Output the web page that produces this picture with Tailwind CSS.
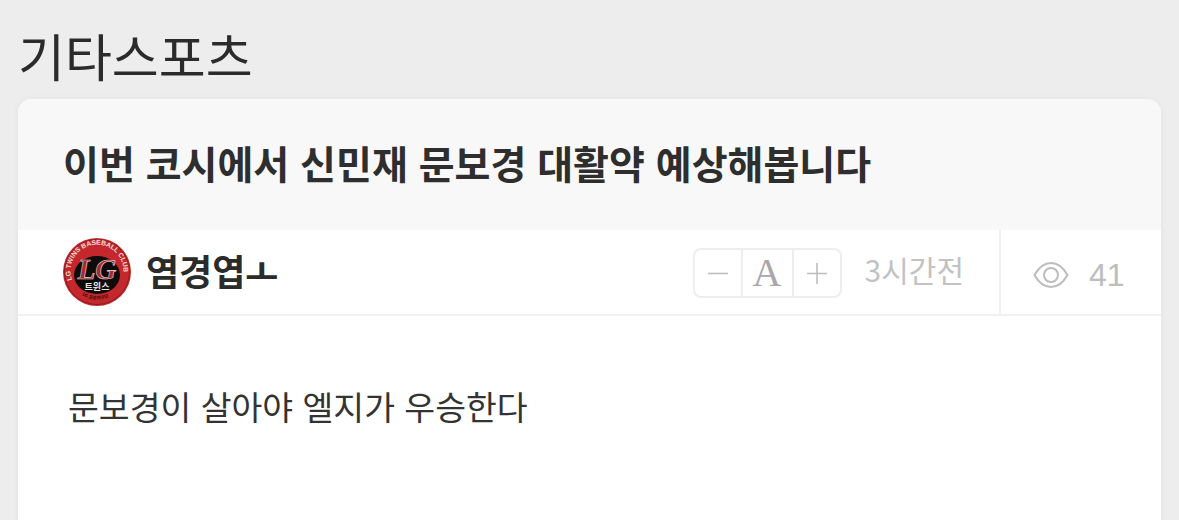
<!DOCTYPE html>
<html lang="ko">
<head>
  <meta charset="UTF-8" />
  <title>기타스포츠</title>
  <script src="https://cdn.jsdelivr.net/npm/@tailwindcss/browser@4"></script>
</head>
<body class="h-[520px] overflow-hidden bg-[#ededed] text-[#2b2b2b] font-['Noto_Sans_CJK_KR',sans-serif]">
  <h1 class="h-[99px] pl-[18px] pt-[20px] text-[51px] leading-[70px] font-normal">기타스포츠</h1>

  <main class="mx-[18px] h-[430px] rounded-t-[14px] bg-white shadow-[0_0_6px_rgba(0,0,0,0.05)]">
    <div class="h-[131px] rounded-t-[14px] bg-[#f8f8f8] pl-[45px] pt-[37px]">
      <h2 class="text-[39px] leading-[52px] font-bold text-[#2e2e2e]">이번 코시에서 신민재 문보경 대활약 예상해봅니다</h2>
    </div>

    <div class="flex h-[86px] items-center border-b-2 border-[#f1f1f1] pl-[45px]">
      <svg viewBox="0 0 68 68" class="h-[68px] w-[68px] shrink-0">
        <defs>
          <path id="ringTop" d="M 9 42 A 26.500 26.500 0 1 1 59 42" />
          <path id="ringBottom" d="M 19 57 A 27 27 0 0 0 49 57" />
        </defs>
        <circle cx="34" cy="34" r="34" fill="#c4282c" />
        <circle cx="34" cy="34" r="32.500" fill="none" stroke="#8a1d20" stroke-width="1" />
        <ellipse cx="34" cy="37" rx="23" ry="19" fill="#0e0b0b" />
        <text font-size="6.800" font-weight="700" fill="#f4dcd6" font-family="'Liberation Sans',sans-serif"><textPath href="#ringTop">LG TWINS BASEBALL CLUB</textPath></text>
        <text font-size="4.500" font-weight="700" fill="#2a0a0a" font-family="'Noto Sans CJK KR',sans-serif"><textPath href="#ringBottom">LG 프로야구단</textPath></text>
        <text x="34" y="41" text-anchor="middle" font-size="29" font-weight="700" font-style="italic" fill="#a82a2c" stroke="#e9d9d6" stroke-width="0.600" font-family="'Liberation Serif',serif">LG</text>
        <text x="34" y="51.500" text-anchor="middle" font-size="9" font-weight="700" fill="#e8e8e8" font-family="'Noto Sans CJK KR',sans-serif">트윈스</text>
      </svg>
      <span class="ml-[15px] mb-[4px] text-[36px] leading-[44px] font-bold text-[#2b2b2b]">염경엽ㅗ</span>

      <div class="ml-auto mt-[2px] flex h-[50px] w-[149px] rounded-[8px] border-2 border-[#eeeeee]">
        <div class="flex w-[48px] items-center justify-center border-r-2 border-[#eeeeee]">
          <svg viewBox="0 0 24 24" class="h-[24px] w-[24px]"><path d="M2 12.500h20" stroke="#bdbdbd" stroke-width="1.600" /></svg>
        </div>
        <div class="flex w-[51px] items-center justify-center border-r-2 border-[#eeeeee] text-[40px] leading-none text-[#a8a8a8] font-['Liberation_Serif',serif]">A</div>
        <div class="flex flex-1 items-center justify-center">
          <svg viewBox="0 0 24 24" class="h-[24px] w-[24px]"><path d="M2 12.500h20M12 2v21" stroke="#bdbdbd" stroke-width="1.600" /></svg>
        </div>
      </div>
      <span class="ml-[23px] mb-[6px] text-[30px] leading-[40px] text-[#c2c2c2]">3시간전</span>
      <div class="ml-[35px] flex h-[86px] w-[162px] items-center border-l-2 border-[#f1f1f1] pl-[32px] pt-[6px]">
        <svg viewBox="0 0 36 28" class="h-[28px] w-[36px]" fill="none" stroke="#bcbcbc" stroke-width="2">
          <path d="M1.500 14C6 6 11.500 2 18 2s12 4 16.500 12C30 22 24.500 26 18 26S6 22 1.500 14Z" />
          <circle cx="18" cy="14" r="7" />
        </svg>
        <span class="ml-[20px] text-[32px] leading-[40px] text-[#bdbdbd] font-['Liberation_Sans',sans-serif]">41</span>
      </div>
    </div>

    <p class="pl-[50px] pt-[65px] text-[33.500px] leading-[50px] text-[#333333]">문보경이 살아야 엘지가 우승한다</p>
  </main>
</body>
</html>
